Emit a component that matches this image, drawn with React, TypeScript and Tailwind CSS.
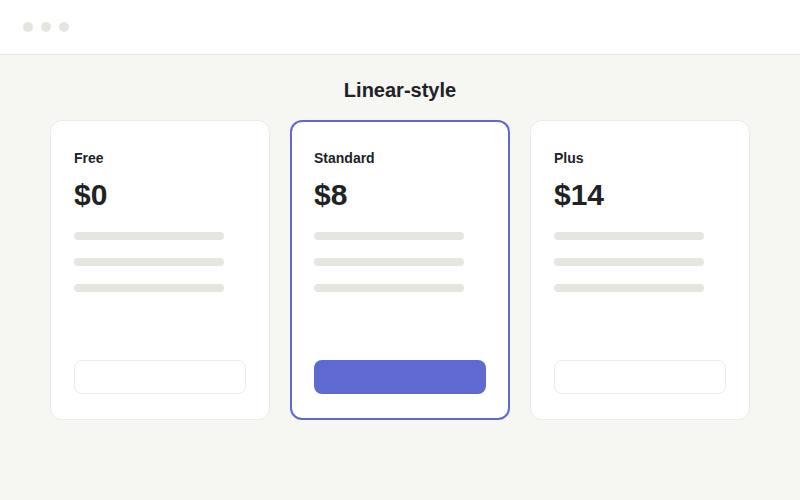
import React from "react";

const plans = [
  { name: "Free", price: "$0", featured: false },
  { name: "Standard", price: "$8", featured: true },
  { name: "Plus", price: "$14", featured: false },
];

export default function App() {
  return (
    <div
      className="w-[800px] h-[500px] bg-[#f6f6f2] text-[#212226] flex flex-col"
      style={{ fontFamily: '"Liberation Sans", Arial, sans-serif' }}
    >
      <div className="h-[55px] bg-white border-b border-[#e6e6e2] flex items-center gap-2 px-[23px]">
        <span className="w-[10px] h-[10px] rounded-full bg-[#e5e5df]" />
        <span className="w-[10px] h-[10px] rounded-full bg-[#e5e5df]" />
        <span className="w-[10px] h-[10px] rounded-full bg-[#e5e5df]" />
      </div>
      <div className="flex flex-col items-center pt-[21px]">
        <h1 className="text-[20px] leading-[28px] font-bold">Linear-style</h1>
        <div className="flex gap-5 mt-4">
          {plans.map((p) => (
            <div
              key={p.name}
              className={
                p.featured
                  ? "w-[220px] h-[300px] bg-white rounded-xl border-2 border-[#5e6ad2] flex flex-col px-[22px] pt-[26px] pb-[24px]"
                  : "w-[220px] h-[300px] bg-white rounded-xl border border-[#ebebe6] flex flex-col px-[23px] pt-[27px] pb-[25px]"
              }
            >
              <div className="text-[14px] leading-[20px] font-bold">{p.name}</div>
              <div className="text-[30px] leading-[36px] font-bold mt-[9px]">{p.price}</div>
              <div className="flex flex-col gap-[18px] mt-[19px]">
                <div className="w-[150px] h-2 rounded-full bg-[#e6e6e0]" />
                <div className="w-[150px] h-2 rounded-full bg-[#e6e6e0]" />
                <div className="w-[150px] h-2 rounded-full bg-[#e6e6e0]" />
              </div>
              {p.featured ? (
                <div className="mt-auto h-[34px] rounded-lg bg-[#5e6ad2]" />
              ) : (
                <div className="mt-auto h-[34px] rounded-lg border border-[#ebebe6] bg-white" />
              )}
            </div>
          ))}
        </div>
      </div>
    </div>
  );
}
